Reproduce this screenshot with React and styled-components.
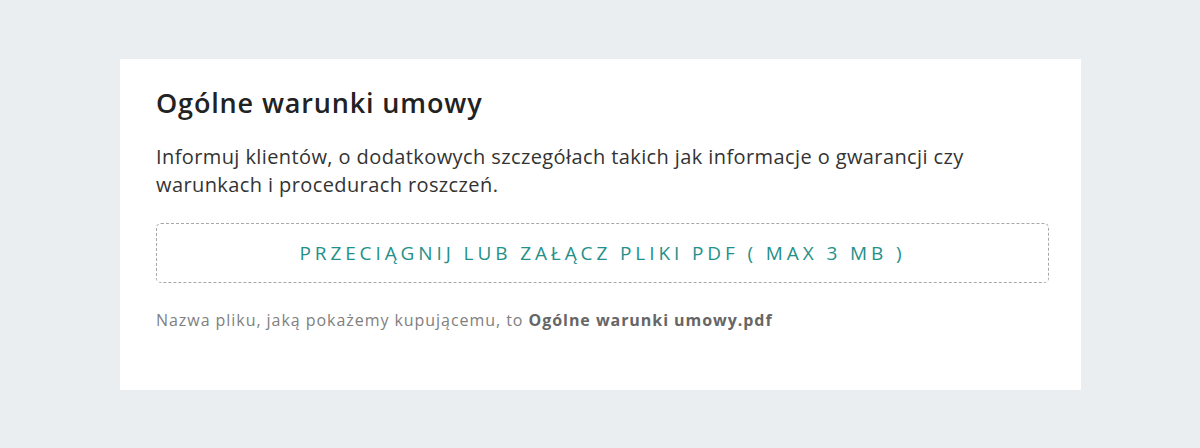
import React from 'react'
import styled, { createGlobalStyle } from 'styled-components'

const Global = createGlobalStyle`
  html, body {
    margin: 0;
    padding: 0;
    background: #ebeef1;
  }
  body {
    font-family: "Open Sans", "Liberation Sans", sans-serif;
  }
`

const Page = styled.div`
  padding: 59px 119px 58px 120px;
`

const Card = styled.section`
  background: #ffffff;
  padding: 26px 32px 58px 36px;
`

const Title = styled.h2`
  margin: 0;
  font-family: "Open Sans", sans-serif;
  font-weight: 600;
  font-size: 27px;
  line-height: 36px;
  letter-spacing: 0.85px;
  color: #222222;
`

const Description = styled.p`
  margin: 22px 0 0;
  font-size: 20px;
  line-height: 28px;
  letter-spacing: 0.4px;
  color: #333333;
  max-width: 860px;
`

const Dropzone = styled.label`
  box-sizing: border-box;
  display: flex;
  align-items: center;
  justify-content: center;
  margin-top: 24px;
  height: 60px;
  border: 1px dashed #a8a8a8;
  border-radius: 5px;
  color: #23908a;
  font-size: 19px;
  letter-spacing: 3.9px;
  text-transform: uppercase;
  cursor: pointer;
`

const Caption = styled.p`
  margin: 25px 0 0;
  font-size: 16px;
  line-height: 24px;
  letter-spacing: 0.95px;
  color: #808080;

  strong {
    color: #666666;
    font-weight: 700;
  }
`

export default function App() {
  return (
    <>
      <Global />
      <Page>
        <Card>
          <Title>Ogólne warunki umowy</Title>
          <Description>
            Informuj klientów, o dodatkowych szczegółach takich jak informacje o gwarancji czy warunkach i procedurach roszczeń.
          </Description>
          <Dropzone>Przeciągnij lub załącz pliki PDF ( max 3 MB )</Dropzone>
          <Caption>
            Nazwa pliku, jaką pokażemy kupującemu, to <strong>Ogólne warunki umowy.pdf</strong>
          </Caption>
        </Card>
      </Page>
    </>
  )
}
